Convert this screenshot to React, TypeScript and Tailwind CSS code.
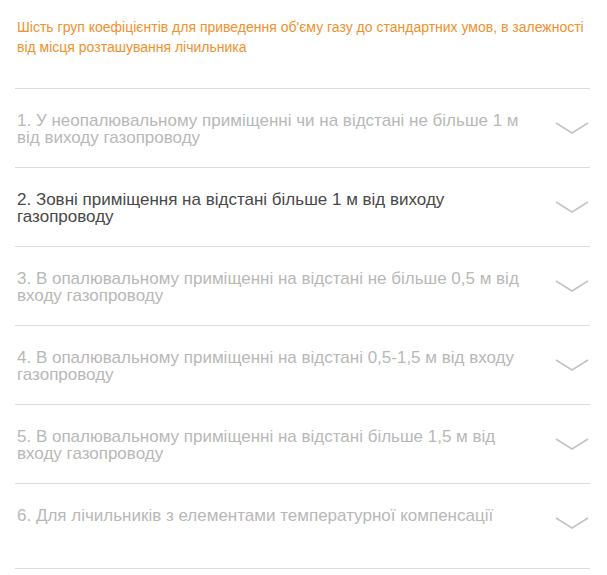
import React from 'react';

const items = [
  { text: '1. У неопалювальному приміщенні чи на відстані не більше 1 м від виходу газопроводу', active: false },
  { text: '2. Зовні приміщення на відстані більше 1 м від виходу газопроводу', active: true },
  { text: '3. В опалювальному приміщенні на відстані не більше 0,5 м від входу газопроводу', active: false },
  { text: '4. В опалювальному приміщенні на відстані 0,5-1,5 м від входу газопроводу', active: false },
  { text: '5. В опалювальному приміщенні на відстані більше 1,5 м від входу газопроводу', active: false },
  { text: '6. Для лічильників з елементами температурної компенсації', active: false },
];

function Chevron() {
  return (
    <svg width="34" height="14" viewBox="0 0 34 14" className="shrink-0">
      <path d="M1 2 L17 12 L33 2" fill="none" stroke="#c4c4c4" strokeWidth="1.6" />
    </svg>
  );
}

export default function App() {
  return (
    <div className="w-[607px] h-[575px] bg-white font-['Liberation_Sans',Arial,sans-serif]">
      <div className="pl-[17px] pr-[17px] pt-[17px]">
        <p className="text-[14px] leading-[20px] text-[#f0912c]">
          Шість груп коефіцієнтів для приведення об'єму газу до стандартних умов, в залежності від місця розташування лічильника
        </p>
      </div>
      <div className="mt-[31px] ml-[15px] w-[575px] border-t border-[#dcdcdc]">
        {items.map((item, i) => (
          <div
            key={i}
            className={`flex items-start justify-between border-b border-[#dcdcdc] pl-[2px] pt-[23px] ${
              i === items.length - 1 ? 'h-[85px]' : 'h-[79px]'
            }`}
          >
            <span
              className={`w-[515px] text-[17px] leading-[17px] ${
                item.active ? 'text-[#484848]' : 'text-[#b8b8b8]'
              }`}
            >
              {item.text}
            </span>
            <div className="pt-[9px] pr-[1px]">
              <Chevron />
            </div>
          </div>
        ))}
      </div>
    </div>
  );
}
